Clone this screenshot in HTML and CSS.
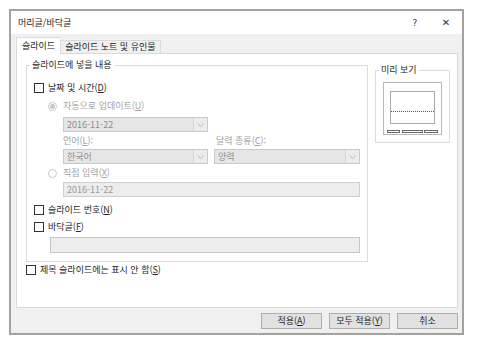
FILE: index.html
```html
<!DOCTYPE html>
<html lang="ko">
<head>
  <meta charset="UTF-8" />
  <title>머리글/바닥글</title>
  <link rel="stylesheet" href="styles.css">
</head>
<body>
  <div class="dialog">
    <!-- 제목 표시줄 -->
    <div class="titlebar">
      <span class="title">머리글/바닥글</span>
      <span class="tb-btn help">?</span>
      <span class="tb-btn close">✕</span>
    </div>

    <div class="dlg-body">
      <!-- 탭 -->
      <div class="tabs">
        <div class="tab active">슬라이드</div>
        <div class="tab">슬라이드 노트 및 유인물</div>
      </div>

      <div class="panel">
        <div class="panel-top">
          <fieldset class="group main-group">
            <legend>슬라이드에 넣을 내용</legend>

            <div class="check-row first">
              <span class="checkbox"></span>
              <span>날짜 및 시간(<u>D</u>)</span>
            </div>

            <div class="radio-row auto">
              <span class="radio checked"></span>
              <span class="dim">자동으로 업데이트(<u>U</u>)</span>
            </div>

            <div class="combo combo-date">
              <span class="combo-text">2016-11-22</span>
              <span class="combo-arrow"><svg width="7" height="4" viewBox="0 0 7 4"><path d="M0.5 0.5 L3.5 3.5 L6.5 0.5" fill="none" stroke="#b5b5b5" stroke-width="1"/></svg></span>
            </div>

            <div class="label-row">
              <span class="lbl-lang dim">언어(<u>L</u>):</span>
              <span class="lbl-cal dim">달력 종류(<u>C</u>):</span>
            </div>

            <div class="combo-row">
              <div class="combo combo-lang">
                <span class="combo-text">한국어</span>
                <span class="combo-arrow"><svg width="7" height="4" viewBox="0 0 7 4"><path d="M0.5 0.5 L3.5 3.5 L6.5 0.5" fill="none" stroke="#b5b5b5" stroke-width="1"/></svg></span>
              </div>
              <div class="combo combo-cal">
                <span class="combo-text">양력</span>
                <span class="combo-arrow"><svg width="7" height="4" viewBox="0 0 7 4"><path d="M0.5 0.5 L3.5 3.5 L6.5 0.5" fill="none" stroke="#b5b5b5" stroke-width="1"/></svg></span>
              </div>
            </div>

            <div class="radio-row direct">
              <span class="radio"></span>
              <span class="dim">직접 입력(<u>X</u>)</span>
            </div>

            <div class="textbox fixed-date">2016-11-22</div>

            <div class="check-row slide-num">
              <span class="checkbox"></span>
              <span>슬라이드 번호(<u>N</u>)</span>
            </div>

            <div class="check-row footer">
              <span class="checkbox"></span>
              <span>바닥글(<u>F</u>)</span>
            </div>

            <div class="textbox footer-box"></div>
          </fieldset>

          <fieldset class="group preview-group">
            <legend>미리 보기</legend>
            <div class="preview">
              <svg width="59" height="53" viewBox="0 0 59 53">
                <rect x="7.5" y="9.5" width="44" height="32" fill="none" stroke="#555" stroke-width="1" stroke-dasharray="1 1"/>
                <line x1="8" y1="29.5" x2="51" y2="29.5" stroke="#555" stroke-width="1" stroke-dasharray="1 1"/>
                <rect x="4.5" y="48.5" width="12" height="2" fill="#fff" stroke="#666" stroke-width="1"/>
                <rect x="19.5" y="48.5" width="20" height="2" fill="#fff" stroke="#666" stroke-width="1"/>
                <rect x="41.5" y="48.5" width="13" height="2" fill="#fff" stroke="#666" stroke-width="1"/>
              </svg>
            </div>
          </fieldset>
        </div>

        <div class="check-row title-skip">
          <span class="checkbox"></span>
          <span>제목 슬라이드에는 표시 안 함(<u>S</u>)</span>
        </div>
      </div>

      <!-- 하단 버튼 -->
      <div class="buttons">
        <button type="button">적용(<u>A</u>)</button>
        <button type="button">모두 적용(<u>Y</u>)</button>
        <button type="button">취소</button>
      </div>
    </div>
  </div>
</body>
</html>
```

FILE: styles.css
```css
* { box-sizing: border-box; }
body {
  margin: 0;
  background: #fff;
  font-family: "Noto Sans CJK KR", "Noto Sans", sans-serif;
  font-size: 9px;
  color: #262626;
}
u { text-decoration: underline; }
.dialog {
  margin: 9px 0 0 9px;
  width: 455px;
  height: 326px;
  border: 2px solid #a3a39b;
  background: #f0f0f0;
  display: flex;
  flex-direction: column;
}
.titlebar {
  height: 23px;
  background: #fff;
  display: flex;
  align-items: center;
  padding-left: 7px;
}
.title {
  flex: 1;
  line-height: 12px;
}
.tb-btn {
  text-align: center;
  line-height: 12px;
  color: #333;
}
.help {
  width: 30px;
  font-family: "DejaVu Sans", sans-serif;
  font-size: 9px;
}
.close {
  width: 32px;
  font-family: "DejaVu Sans", sans-serif;
  font-size: 10px;
}
.dlg-body {
  flex: 1;
  padding: 3px 4px 0 5px;
  display: flex;
  flex-direction: column;
}
.tabs {
  display: flex;
  align-items: flex-end;
  height: 16px;
}
.tab {
  height: 13px;
  padding: 0 4px;
  line-height: 12px;
  border: 1px solid #dadada;
  border-bottom: none;
  background: #f0f0f0;
}
.tab.active {
  height: 17px;
  margin-bottom: -1px;
  padding: 0 5px;
  line-height: 15px;
  background: #fff;
  border-right: none;
  position: relative;
  z-index: 1;
}
.panel {
  height: 255px;
  background: #fff;
  border: 1px solid #dadada;
  padding: 5px 6px 0 9px;
}
.panel-top {
  display: flex;
  align-items: flex-start;
}
.group {
  margin: 0;
  min-width: 0;
  border: 1px solid #dcdcdc;
}
.group legend {
  padding: 0 2px;
  margin-left: -4px;
  line-height: 12px;
}
.main-group {
  width: 342px;
  height: 203px;
  padding: 10px 7px 7px 7px;
}
.preview-group {
  width: 75px;
  margin-top: 5px;
  margin-left: 7px;
  padding: 6px 7px 7px 7px;
}
.preview {
  width: 59px;
  height: 53px;
  border: 1px solid #b8b8b8;
  background: #fff;
}
.preview svg { display: block; margin: -1px; }

.check-row, .radio-row {
  height: 14px;
  display: flex;
  align-items: center;
  line-height: 12px;
}
.check-row { gap: 4px; }
.radio-row { gap: 6px; margin-left: 14px; }
.checkbox {
  width: 10px;
  height: 10px;
  border: 1px solid #333;
  background: #fff;
}
.radio {
  width: 9px;
  height: 9px;
  border: 1px solid #c6c6c6;
  border-radius: 50%;
  background: #fff;
  display: flex;
  align-items: center;
  justify-content: center;
}
.radio.checked::after {
  content: "";
  width: 5px;
  height: 5px;
  border-radius: 50%;
  background: #c6c6c6;
}
.dim { color: #a2a2a2; }

.radio-row.auto { margin-top: 4px; }
.combo {
  height: 15px;
  border: 1px solid #c9c9c9;
  background: #e6e6e6;
  display: flex;
  align-items: center;
  color: #8e8e8e;
  line-height: 12px;
}
.combo-text { flex: 1; padding-left: 3px; }
.combo-arrow {
  width: 14px;
  height: 13px;
  border-left: 1px solid #d6d6d6;
  background: #ececec;
  display: flex;
  align-items: center;
  justify-content: center;
}
.combo-date {
  width: 145px;
  margin: 4px 0 0 29px;
}
.label-row {
  height: 12px;
  margin: 3px 0 0 29px;
  display: flex;
  line-height: 12px;
}
.lbl-lang { width: 153px; }
.combo-row {
  margin: 2px 0 0 29px;
  display: flex;
  gap: 6px;
}
.combo-lang { width: 145px; }
.combo-cal { flex: 1; }
.radio-row.direct { margin-top: 2px; }
.textbox {
  border: 1px solid #cfcfcf;
  background: #ededed;
  color: #9a9a9a;
  line-height: 12px;
  padding-left: 3px;
  display: flex;
  align-items: center;
}
.fixed-date {
  height: 15px;
  margin: 2px 0 0 29px;
}
.check-row.slide-num { margin-top: 6px; }
.check-row.footer { margin-top: 3px; }
.footer-box {
  height: 16px;
  margin: 3px 0 0 16px;
  border-color: #c6c6c6;
}
.check-row.title-skip { margin-top: 1px; }

.buttons {
  margin-top: 5px;
  display: flex;
  justify-content: flex-end;
  gap: 7px;
}
.buttons button {
  width: 61px;
  height: 16px;
  padding: 0;
  border: 1px solid #adadad;
  background: #e1e1e1;
  font-family: "Noto Sans CJK KR", "Noto Sans", sans-serif;
  font-size: 9px;
  line-height: 12px;
  color: #262626;
}
```
